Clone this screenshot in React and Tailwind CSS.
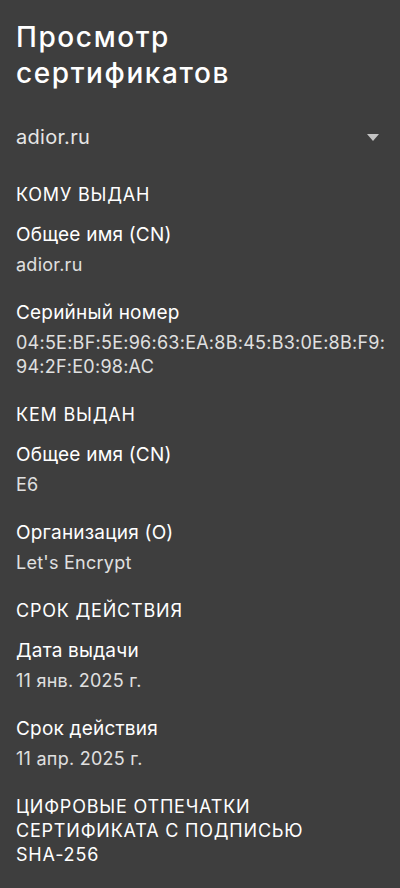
import React from 'react';

const sections = [
  {
    title: 'КОМУ ВЫДАН',
    rows: [
      { label: 'Общее имя (CN)', value: ['adior.ru'] },
      { label: 'Серийный номер', value: ['04:5E:BF:5E:96:63:EA:8B:45:B3:0E:8B:F9:', '94:2F:E0:98:AC'] },
    ],
  },
  {
    title: 'КЕМ ВЫДАН',
    rows: [
      { label: 'Общее имя (CN)', value: ['E6'] },
      { label: 'Организация (O)', value: ["Let's Encrypt"] },
    ],
  },
  {
    title: 'СРОК ДЕЙСТВИЯ',
    rows: [
      { label: 'Дата выдачи', value: ['11 янв. 2025 г.'] },
      { label: 'Срок действия', value: ['11 апр. 2025 г.'] },
    ],
  },
];

export default function App() {
  return (
    <div className="w-[400px] h-[888px] overflow-hidden bg-[#3e3e3e] text-white font-['Inter',sans-serif] px-4">
      {/* Title */}
      <h1 className="pt-[19px] text-[28px] leading-[36px] font-medium tracking-[1.6px] text-white">
        Просмотр
        <br />
        сертификатов
      </h1>

      {/* Certificate selector */}
      <div className="mt-[32px] flex items-center justify-between">
        <span className="text-[20px] leading-[28px] tracking-[0.3px] text-[#e6e6e6]">adior.ru</span>
        <svg width="12" height="7" viewBox="0 0 12 7" className="mr-[5px]">
          <path d="M0 0 L12 0 L6 7 Z" fill="#c4c4c4" />
        </svg>
      </div>

      {/* Sections */}
      <div className="mt-[32px] flex flex-col gap-6">
        {sections.map((s) => (
          <div key={s.title} className="flex flex-col gap-4">
            <div className="text-[18px] leading-[24px] tracking-[0.8px] text-white">{s.title}</div>
            <div className="flex flex-col gap-6">
              {s.rows.map((r, i) => (
                <div key={i} className="flex flex-col gap-[6px]">
                  <div className="text-[19px] leading-[24px] tracking-[0.2px] text-white">{r.label}</div>
                  <div className="text-[18px] leading-[24px] tracking-[0.25px] text-[#e0e0e0]">
                    {r.value.map((v, j) => (
                      <div key={j}>{v}</div>
                    ))}
                  </div>
                </div>
              ))}
            </div>
          </div>
        ))}
        <div className="text-[18px] leading-[24px] tracking-[0.8px] text-white">
          ЦИФРОВЫЕ ОТПЕЧАТКИ
          <br />
          СЕРТИФИКАТА С ПОДПИСЬЮ
          <br />
          SHA-256
        </div>
      </div>
    </div>
  );
}
